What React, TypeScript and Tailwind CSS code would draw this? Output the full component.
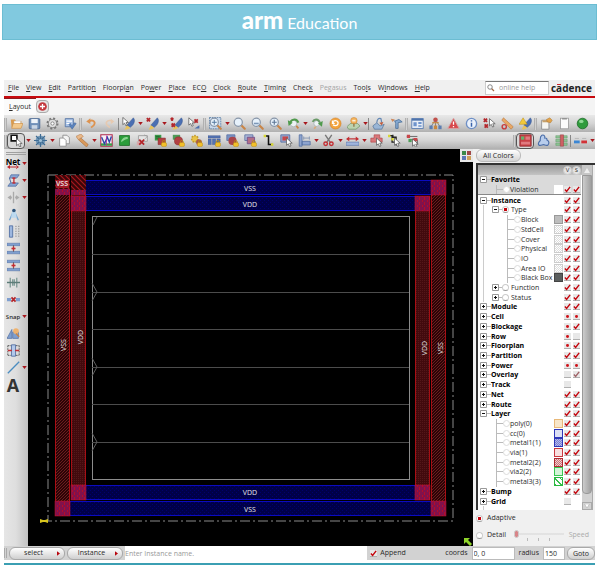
import { useState, type ReactNode } from "react";
import clsx from "clsx";

/* ---------- shared icon parts (16x16 grid) ---------- */

const Cursor = ({ x = 0, y = 0 }: { x?: number; y?: number }) => (
  <path
    d="M0 0v9l2.200-2 1.600 3.400 1.700-.8L4 6.300h3z"
    transform={`translate(${x} ${y})`}
    fill="#fff"
    stroke="#555"
    strokeWidth="0.9"
  />
);

const Cross = ({ x = 0, y = 0, s = 5 }: { x?: number; y?: number; s?: number }) => (
  <path
    d={`M${x} ${y}l${s} ${s}M${x + s} ${y}l${-s} ${s}`}
    stroke="#b3262b"
    strokeWidth="2.2"
  />
);

const Brush = () => (
  <>
    <path d="M14 1c2 2 1.600 6-.5 8.500l-3.500 3.500-4-3z" fill="#4a6fb3" stroke="#33538c" strokeWidth="0.6" />
    <path d="M6 10l4 3C8 15.500 5 15.500 3 15c1.800-1 1.500-3 3-5z" fill="#e8c35c" />
  </>
);

const Lock = ({ x = 9, y = 8 }: { x?: number; y?: number }) => (
  <g transform={`translate(${x} ${y})`}>
    <path d="M1.200 3V1.800a1.800 1.800 0 0 1 3.600 0V3" fill="none" stroke="#b98a12" strokeWidth="1.1" />
    <rect x="0" y="2.5" width="6.5" height="5" rx="2" fill="#f2c02b" stroke="#b98a12" strokeWidth="0.6" />
  </g>
);

const Lens = ({ children }: { children?: ReactNode }) => (
  <>
    <path d="M9.500 9.500l5 5" stroke="#c98546" strokeWidth="2.6" strokeLinecap="round" />
    <circle cx="6.5" cy="6.5" r="5" fill="#e6f1fb" stroke="#8795a8" strokeWidth="1.5" />
    {children}
  </>
);

const icons: Record<string, ReactNode> = {
  open: (
    <>
      <path d="M1 3h5l1.500 2H14v8H2z" fill="#d99b4e" />
      <path d="M5 5h8v4H5z" fill="#fff" stroke="#bbb" strokeWidth="0.5" />
      <path d="M4 8h12l-2.500 6H2z" fill="#f3c98d" stroke="#c98a3e" strokeWidth="0.7" />
    </>
  ),
  save: (
    <>
      <rect x="1.5" y="2" width="13" height="12.5" rx="1" fill="#6f8fb8" stroke="#41608c" />
      <path d="M4 2.500h8v5H4z" fill="#eef3f9" />
      <path d="M4.500 10h7v4.500h-7z" fill="#c9d5e4" />
    </>
  ),
  gear: (
    <>
      <circle cx="8" cy="8" r="6.3" stroke="#777" strokeWidth="2.2" strokeDasharray="2.5 2.45" />
      <circle cx="8" cy="8" r="5" fill="#e2e2e2" stroke="#777" />
      <circle cx="8" cy="8" r="2" fill="#fff" stroke="#777" />
    </>
  ),
  export: (
    <>
      <path d="M1.500 2h10v10h-10z" fill="#a9c2e6" stroke="#4f6f9f" />
      <path d="M3 5h7M3 8h4" stroke="#fff" strokeWidth="1.4" />
      <path d="M6 9l4 6 5-7-2-1-3.500 4-1.500-3z" fill="#5a83c0" stroke="#3c5f94" strokeWidth="0.6" />
    </>
  ),
  undo: (
    <>
      <path d="M4.500 5.500c5-3 8.500.5 7 3.500-.8 1.800-2.500 2.600-4 4" fill="none" stroke="#dd9350" strokeWidth="2.2" />
      <path d="M1.500 5.500L6.500 1.500v7z" fill="#dd9350" />
    </>
  ),
  redo: (
    <>
      <path d="M11.500 5.500c-5-3-8.500.5-7 3.500.8 1.800 2.500 2.600 4 4" fill="none" stroke="#e6c9b0" strokeWidth="2" />
      <path d="M14 5.500L9.500 2v7z" fill="#e6c9b0" />
    </>
  ),
  selectBrush: (
    <>
      <Brush />
      <Cursor x={1} y={0.5} />
    </>
  ),
  clearBrush: (
    <>
      <Brush />
      <Cross x={1} y={1.5} s={4} />
    </>
  ),
  redBrush: (
    <>
      <Brush />
      <Cross x={1} y={1} s={3} />
      <Cross x={2} y={8} s={4} />
    </>
  ),
  cursorClear: (
    <>
      <Cursor x={1} y={1} />
      <Cross x={8} y={3} s={4} />
      <path d="M8 14l6-4v4z" fill="#4d6fae" />
    </>
  ),
  zoomSelect: (
    <>
      <rect x="0.5" y="0.5" width="14" height="14" fill="#c8d9ec" stroke="#54779f" strokeDasharray="2 1" />
      <Lens>
        <path d="M3.500 6.500h6M6.500 3.500v6" stroke="#54779f" strokeWidth="1.2" />
      </Lens>
    </>
  ),
  zoomIn: <Lens />,
  zoomOut: (
    <Lens>
      <path d="M3.500 8h6" stroke="#7b97b8" strokeWidth="2" />
    </Lens>
  ),
  zoomFit: (
    <Lens>
      <path d="M3.500 6.500h6M6.500 3.500v6" stroke="#5d7796" strokeWidth="1.4" />
    </Lens>
  ),
  prevView: (
    <>
      <path d="M10 9l4 5" stroke="#c98546" strokeWidth="2.2" />
      <circle cx="8" cy="8" r="4" fill="#edf3f5" stroke="#a6b1b5" />
      <path d="M14 7C12 2 7 2 4 6" fill="none" stroke="#4f9a4c" strokeWidth="2.6" />
      <path d="M1 4l1 7 5-4z" fill="#4f9a4c" />
    </>
  ),
  nextView: (
    <>
      <path d="M7 10l-3 4.500" stroke="#d9a878" strokeWidth="2" />
      <circle cx="7" cy="8" r="3.5" fill="#edf3f5" stroke="#a6b1b5" />
      <path d="M2 6c2-4 7-4 9 1" fill="none" stroke="#6a9a68" strokeWidth="2.4" />
      <path d="M14.500 5l-1 7-5-4z" fill="#4f9a4c" />
    </>
  ),
  refresh: (
    <>
      <circle cx="8" cy="8" r="6.8" fill="#f3a440" stroke="#cf7b1b" strokeWidth="0.7" />
      <path d="M5 5.500c3.500-2.500 7 0 6 3-1 2.500-4.500 2.800-6 .8" fill="none" stroke="#fff" strokeWidth="1.7" />
      <path d="M3.500 3.500v5h4z" fill="#fff" />
    </>
  ),
  globe: (
    <>
      <path d="M0 12l4-4h9l3 3-5 4H2z" fill="#bcd3b0" stroke="#6f9467" strokeWidth="0.9" />
      <circle cx="8.5" cy="4.5" r="4" fill="#f2b25a" stroke="#c98034" strokeWidth="0.6" />
      <path d="M8.500 8v4" stroke="#8a6a3a" strokeWidth="1.4" />
      <path d="M6.500 3.500h4v2h-4z" fill="#fdeed8" />
    </>
  ),
  descend: (
    <>
      <path d="M1 11l5-4 4 4 5-2-3 6H3z" fill="#9ab6d6" stroke="#4a6c96" strokeWidth="0.8" />
      <path d="M6 7c0-4 2-6 5-5l1 5" fill="none" stroke="#6387b4" strokeWidth="1.5" />
      <path d="M9 7l3 3 2-4z" fill="#c25a3b" />
    </>
  ),
  ascend: (
    <>
      <path d="M2 3l4 2M6 5l5-2 4 3-5 1v7H7V8z" fill="#85a8d0" stroke="#426894" strokeWidth="0.9" />
      <path d="M1 2l5 1-3 3z" fill="#d18a5b" />
    </>
  ),
  window: (
    <>
      <rect x="1" y="2" width="14" height="12" fill="#e8eef7" stroke="#4e74ad" />
      <path d="M1 2h14v2.500H1z" fill="#4e74ad" />
      <path d="M3 6.500h4v5H3zM9 6h4v2.500H9zM9 10h4v2H9z" fill="#6d93cc" />
    </>
  ),
  hierarchy: (
    <>
      <path d="M8 3L2.500 12M8 3l5.500 9M8 3v9" fill="none" stroke="#777" />
      <circle cx="8" cy="3.5" r="2.8" fill="#c0504a" />
      <path d="M.5 10.500h4v4.500h-4z" fill="#5c7db0" />
      <path d="M6 10.500h4v4.500H6z" fill="#c8883f" />
      <path d="M11.500 10.500h4v4.500h-4z" fill="#5c7db0" />
      <path d="M4 7h8" stroke="#c8883f" strokeWidth="1.5" />
    </>
  ),
  warning: (
    <>
      <path d="M8 1.500L15 14H1z" fill="#d8474b" stroke="#d7a3a3" strokeWidth="1.2" strokeLinejoin="round" />
      <path d="M8 5.500v4M8 11v1.500" stroke="#fff" strokeWidth="1.6" />
    </>
  ),
  info: (
    <>
      <circle cx="8" cy="8" r="6.3" fill="#eaf1fb" stroke="#6f90c6" strokeWidth="1.7" />
      <path d="M8 7v5M8 4v1.600" stroke="#3a63ab" strokeWidth="1.8" />
    </>
  ),
  crossCursor: (
    <>
      <Cross x={1} y={2} s={4} />
      <Cross x={2} y={9} s={4} />
      <Cursor x={8} y={2} />
    </>
  ),
  ruler: (
    <>
      <path d="M3 1l12 11-2.500 3L1 4z" fill="#e8a765" stroke="#b9763a" strokeWidth="0.7" />
      <circle cx="4" cy="12" r="2.6" fill="none" stroke="#c73b3b" strokeWidth="1.7" />
    </>
  ),
  alertBrush: (
    <>
      <Brush />
      <path d="M5 1l5 8H0z" fill="#f3c93a" stroke="#b98a12" strokeWidth="0.6" />
    </>
  ),
  note: (
    <>
      <path d="M2 4h9v11H2z" fill="#f6f6f2" stroke="#888" />
      <path d="M3 4h7v2.500H3z" fill="#c7a06a" />
      <path d="M8 3l4-2 3 3-2 3-4-1z" fill="#e3a44c" stroke="#a8722a" strokeWidth="0.6" />
    </>
  ),
  page: (
    <>
      <rect x="3" y="1.5" width="10" height="13" fill="#fbfbfb" stroke="#999" />
      <path d="M5 1.500h6v1.500H5z" fill="#888" />
    </>
  ),
  ball: (
    <>
      <circle cx="8" cy="8" r="6.5" fill="#2f9b3c" stroke="#1d6d29" />
      <ellipse cx="6.5" cy="5.5" rx="2.8" ry="2" fill="#8fd895" />
    </>
  ),
  pick: (
    <>
      <path d="M1.500 1.500h7v7h-7z" fill="#fff" stroke="#111" strokeWidth="2" />
      <Cursor x={8} y={5.5} />
    </>
  ),
  snow: (
    <>
      <circle cx="8" cy="8" r="6" fill="#6f97b8" />
      <path d="M8 0v16M0 8h16M2.500 2.500l11 11M13.500 2.500l-11 11" stroke="#3f6c93" strokeWidth="1.5" />
      <circle cx="8" cy="8" r="2" fill="#9fc0d6" />
    </>
  ),
  copy: (
    <>
      <path d="M6 1.500h5l3 3V12H6z" fill="#f4f4f4" stroke="#888" />
      <path d="M2 5h5l3 3v7H2z" fill="#fff" stroke="#888" />
    </>
  ),
  pencil: (
    <>
      <path d="M5 4l10 9-2 3-10-9z" fill="#d99a5c" stroke="#a76b37" strokeWidth="0.7" />
      <path d="M0 3l6-3 3 3-6 4z" fill="#e9b98a" stroke="#b37848" strokeWidth="0.7" />
    </>
  ),
  wave: (
    <>
      <path d="M1 1h14v14H1z" fill="#f6eef6" stroke="#b0284c" strokeWidth="1.3" />
      <path d="M1 13h14" stroke="#3e9c48" strokeWidth="3" />
      <path d="M2 4l3.500 8L9 4l2.500 6L14 3" fill="none" stroke="#2d46a8" strokeWidth="1.7" />
      <path d="M8 2v12" stroke="#a72aa0" />
    </>
  ),
  greenBox: (
    <>
      <rect x="2" y="2" width="12" height="12" fill="#2c9d3b" stroke="#1b6e26" />
      <path d="M4 8c2-4 6-5 8-4v2C9 6 7 8 4 10z" fill="#8bd391" />
    </>
  ),
  clearHash: (
    <>
      <path d="M3 2h11v7H3z" fill="#e4e4e4" stroke="#999" />
      <path d="M10 1l4 2-4 4" stroke="#999" strokeWidth="0.8" />
      <path d="M1 9h4v5H1z" fill="#d7a8aa" />
      <Cross x={4} y={7} s={6} />
    </>
  ),
  netLock: (
    <>
      <path d="M1 1h8v7H1z" fill="#3b9a49" />
      <path d="M2 3h5M2 5h5" stroke="#1d6329" />
      <path d="M5 5h9v8H5z" fill="#b23f43" stroke="#7d2528" strokeWidth="0.6" />
      <Lock />
    </>
  ),
  netLockRed: (
    <>
      <path d="M1 1h9v6H1z" fill="#4f9a58" />
      <circle cx="8" cy="8.5" r="5" fill="#b23f43" stroke="#7d2528" strokeWidth="0.6" />
      <Lock />
    </>
  ),
  gearLock: (
    <>
      <circle cx="6" cy="6" r="4" fill="#e9c347" stroke="#c09a32" strokeWidth="2" strokeDasharray="2 1.5" />
      <circle cx="11" cy="10" r="3.5" fill="#a85a4c" />
      <Lock />
    </>
  ),
  pinLock: (
    <>
      <path d="M0 2h15v3H0zM0 6h4v7H0zM5.500 6h4v7h-4zM11 6h4v4h-4z" fill="#5473b3" stroke="#38528a" strokeWidth="0.5" />
      <Lock />
    </>
  ),
  ringLock: (
    <>
      <path d="M1 1h10v7H1z" fill="#7991c2" stroke="#5c74a8" />
      <circle cx="8" cy="8.5" r="5" fill="#a94449" />
      <Lock />
    </>
  ),
  boxLock: (
    <>
      <path d="M1 1h10v7H1z" fill="#aab7d6" stroke="#5c6fa3" />
      <path d="M4 4h9v8H4z" fill="#b46f86" stroke="#6b4c8c" />
      <Lock />
    </>
  ),
  wire: (
    <>
      <path d="M4 2.500h4v10.500h5" fill="none" stroke="#111" strokeWidth="1.9" />
      <path d="M2 1h3v3H2zM11 11.500h3v3h-3z" fill="#d7d636" />
    </>
  ),
  areaCursor: (
    <>
      <path d="M1 1h11v9H1z" fill="#96a8cf" stroke="#536aa0" />
      <path d="M3 3h7v5H3z" fill="#c7464a" />
      <Cursor x={8} y={5} />
    </>
  ),
  blueRuler: (
    <>
      <path d="M1.500 1h3.500v14H1.500zM5 9h10v4.500H5z" fill="#8ea4cf" stroke="#506b9f" strokeWidth="0.9" />
      <path d="M7 5h7M7 3v4M14 3v4" stroke="#7d8fae" />
    </>
  ),
  scissors: (
    <>
      <path d="M4 1l6 9M12 1L6 10" stroke="#777" strokeWidth="1.7" />
      <circle cx="4.5" cy="12" r="2.2" fill="none" stroke="#c32e33" strokeWidth="1.7" />
      <circle cx="11.5" cy="12" r="2.2" fill="none" stroke="#c32e33" strokeWidth="1.7" />
    </>
  ),
  stretch: (
    <>
      <path d="M0 10h16v4H0z" fill="#9fb4dc" stroke="#5370a7" strokeWidth="0.7" />
      <path d="M2 6h12" stroke="#c32e33" strokeWidth="1.4" />
      <path d="M0 6l4-3v6zM16 6l-4-3v6z" fill="#c32e33" />
    </>
  ),
  redCursor: (
    <>
      <path d="M5 1h7v4h3v5H1V5h4z" fill="#d9777a" stroke="#a93e42" strokeWidth="0.7" />
      <Cursor x={8} y={5} />
    </>
  ),
  wireCursor: (
    <>
      <path d="M1 2h4v8h4M6 1v3h4v10" fill="none" stroke="#222" strokeWidth="1.6" />
      <path d="M4 5h3v3H4zM0 1h3v3H0z" fill="#d7d636" />
      <Cursor x={8} y={5} />
    </>
  ),
  rewire: (
    <>
      <path d="M1 3h13M4 7h10v6" fill="none" stroke="#6b6b6b" strokeWidth="1.2" />
      <path d="M1 1h4v4H1zM9 5h5v4H9z" fill="#c7464a" />
      <path d="M3 6h4v4H3z" fill="#4e9d58" />
      <Cursor x={8} y={6} />
    </>
  ),
  floorView: (
    <>
      <path d="M1 1h14v14H1z" fill="#c84046" stroke="#8f2b30" />
      <path d="M2.500 3h4v4h-4z" fill="#63b06c" />
      <path d="M8 3h5.500v4H8zM2.500 9.500h11V13h-11z" fill="#e07a80" />
    </>
  ),
  amoeba: (
    <path
      d="M6 1.500c3-1 4 1.500 3.500 3.500 2-.5 3 1 2.800 2.500 2.500 1 3 4 1.200 6-2 1.500-4-.5-5.500-.5s-4 2-5.800.5c-1.500-2 .3-4 1.800-5.500C4 6 3.500 3 6 1.500z"
      fill="#b8cdec"
      stroke="#4a6da8"
      strokeWidth="1.4"
    />
  ),
  physView: (
    <>
      <path d="M1 2h14v3H1zM1 6.500h14v3H1zM1 11h14v3H1z" fill="#8cc394" stroke="#528f5a" strokeWidth="0.5" />
      <path d="M6.500 1h4v14h-4z" fill="#cf6064" stroke="#963a3e" strokeWidth="0.6" />
    </>
  ),
  dash: (
    <>
      <path d="M0 8h7v3.500H0z" fill="#3b86d4" />
      <path d="M9 8h7v3.500H9z" fill="#d23237" />
      <path d="M1 5.500h5M10 5.500h5" stroke="#aaa" strokeWidth="0.8" />
    </>
  ),
  // left palette
  editWire: (
    <>
      <path d="M5 1h10l-3 4H3zM4 11h10l-3 4H1z" fill="#88a5d4" stroke="#4a699f" strokeWidth="0.9" />
      <path d="M3 5l2 6" stroke="#4a699f" strokeWidth="1.2" />
      <path d="M8.500 4v8M6.500 5h4M6.500 11h4" stroke="#c32e33" strokeWidth="1.6" />
    </>
  ),
  move: <path d="M8 1v14M2 8h4M10 8h4M5 6l-3 2 3 2M11 6l3 2-3 2" fill="none" stroke="#aaa" strokeWidth="1.6" />,
  compass: (
    <>
      <path d="M8 4L3 15M9 4l5 11" stroke="#79a7cf" strokeWidth="1.7" />
      <path d="M6 5h5l1 7H5z" fill="#bcd9ef" />
      <circle cx="8.5" cy="3" r="2.2" fill="#2d557d" />
    </>
  ),
  bars: (
    <>
      <path d="M3 1h4v14H3z" fill="#9db7df" stroke="#4a699f" />
      <path d="M11 1v14M14.500 1v14" stroke="#777" strokeDasharray="1.5 1.5" />
    </>
  ),
  spread: (
    <>
      <path d="M0 1.500h16v3H0zM0 11.500h16v3H0z" fill="#7f9fcf" stroke="#4a699f" strokeWidth="0.6" />
      <path d="M8 4v8" stroke="#555" />
      <path d="M5.500 8h5M8 5.500v5" stroke="#c32e33" strokeWidth="1.8" />
    </>
  ),
  join: (
    <>
      <path d="M4 2v12M12 2v12M7 4v8M9 4v8" stroke="#7d9a95" strokeWidth="1.6" />
      <path d="M0 8h16" stroke="#5d7c78" strokeWidth="1.8" />
    </>
  ),
  cut: (
    <>
      <path d="M0 6h5v4H0zM11 6h5v4h-5z" fill="#7f9fcf" />
      <Cross x={5.5} y={5.5} />
    </>
  ),
  align: (
    <>
      <path d="M0 14L6 3v11zM7 14V6h7v8z" fill="#7f9fcf" stroke="#4a699f" strokeWidth="0.8" />
      <circle cx="11" cy="5" r="3.5" fill="#efb36f" />
      <path d="M11 8l4 4" stroke="#c98546" strokeWidth="1.7" />
    </>
  ),
  fence: (
    <>
      <path d="M5.500 1h5v14h-5z" fill="#b3c8ea" stroke="#4a699f" />
      <path d="M1 2h4M11 2h4M1 14h4M11 14h4M1 2v12M15 2v12" stroke="#444" strokeDasharray="2 1.2" />
      <path d="M1 8h5M10 8h5" stroke="#c32e33" strokeWidth="1.7" />
    </>
  ),
  line: <path d="M1 15L15 1" stroke="#4a8cc0" strokeWidth="1.6" />,
};

function Icon({ name }: { name: string }) {
  return (
    <svg viewBox="0 0 16 16" fill="none" className="size-[13px] shrink-0" aria-hidden="true">
      {icons[name]}
    </svg>
  );
}

const Caret = () => (
  <svg viewBox="0 0 6 4" className="h-[3px] w-[5px]" aria-hidden="true">
    <path d="M0 0h6L3 4z" fill="#a8161c" />
  </svg>
);

/* ---------- toolbars ---------- */

type Tool = { icon: string; menu?: boolean; active?: boolean } | "grip" | "sep" | "space";

const t = (icon: string): Tool => ({ icon });
const m = (icon: string): Tool => ({ icon, menu: true });

const fileTools: Tool[] = [
  "grip", t("open"), t("save"), t("gear"), t("export"),
  "grip", t("undo"), t("redo"),
  "sep", m("selectBrush"), m("clearBrush"), t("redBrush"), t("cursorClear"),
  "grip", m("zoomSelect"), t("zoomIn"), t("zoomOut"), t("zoomFit"), m("prevView"), t("nextView"), t("refresh"), m("globe"),
  "sep", t("descend"), t("ascend"),
  "grip", t("window"), t("hierarchy"), t("warning"), t("info"), t("crossCursor"), t("ruler"), t("alertBrush"),
  "grip", t("note"), t("page"), t("ball"),
];

const editTools: Tool[] = [
  "grip", { icon: "pick", menu: true, active: true }, m("snow"), t("copy"), m("pencil"),
  t("wave"), t("greenBox"), t("clearHash"), t("netLock"), t("netLockRed"), t("gearLock"), t("pinLock"),
  t("ringLock"), t("boxLock"), t("wire"), t("areaCursor"), m("blueRuler"), m("scissors"), m("stretch"),
  t("redCursor"), t("wireCursor"), t("rewire"),
  "space", "grip", { icon: "floorView", active: true }, t("amoeba"), t("physView"), "sep", m("dash"),
];

function Toolbar({ label, tools }: { label: string; tools: Tool[] }) {
  return (
    <div
      role="toolbar"
      aria-label={label}
      className="flex h-[17px] items-center overflow-hidden bg-linear-to-b from-[#e8e8e8] via-[#d4d4d4] to-[#b0b0b0]"
    >
      {tools.map((tool, i) => {
        if (tool === "space") return <div key={i} className="flex-1" />;
        if (tool === "grip")
          return <div key={i} className="h-3 w-[3px] shrink-0 border-x border-[#b0b0b0] bg-[#d0d0d0]" />;
        if (tool === "sep") return <div key={i} className="h-3 w-px shrink-0 bg-[#888]" />;
        return (
          <div key={i} className="flex shrink-0 items-center">
            <button
              aria-label={tool.icon}
              className={clsx(
                "flex h-4 w-[18px] items-center justify-center",
                tool.active && "rounded-sm border border-[#555] bg-[#d8d8d8]"
              )}
            >
              <Icon name={tool.icon} />
            </button>
            {tool.menu && (
              <button aria-label={`${tool.icon} options`} className="flex h-4 w-1.5 items-center justify-center">
                <Caret />
              </button>
            )}
          </div>
        );
      })}
    </div>
  );
}

/* ---------- menu bar ---------- */

const menus: [string, number][] = [
  ["File", 0], ["View", 0], ["Edit", 0], ["Partition", 8], ["Floorplan", 7], ["Power", 2],
  ["Place", 0], ["ECO", 2], ["Clock", 0], ["Route", 0], ["Timing", 0], ["Check", 4],
  ["Pegasus", -1], ["Tools", 3], ["Windows", 1], ["Help", 0],
];

function MenuBar() {
  return (
    <div className="flex h-[18px] items-center border-b-2 border-[#c80a0e] bg-[#f0f0f0]">
      <nav className="flex flex-1 gap-[7px] pl-1">
        {menus.map(([name, key]) => (
          <button key={name} disabled={key < 0} className="disabled:text-[#a5a5a5]">
            {key < 0 ? (
              name
            ) : (
              <>
                {name.slice(0, key)}
                <span className="underline underline-offset-1">{name[key]}</span>
                {name.slice(key + 1)}
              </>
            )}
          </button>
        ))}
      </nav>
      <label className="flex h-3.5 w-16 items-center gap-1 border border-[#ccc] border-t-[#777] bg-white px-px">
        <svg viewBox="0 0 16 16" className="size-2 shrink-0" aria-hidden="true">
          <path d="M9 9l5 5" stroke="#a36a45" strokeWidth="2.5" />
          <circle cx="6" cy="6" r="4.5" fill="#fff" stroke="#666" strokeWidth="1.5" />
        </svg>
        <input
          aria-label="online help"
          placeholder="online help"
          className="w-full min-w-0 outline-none placeholder:text-[#9a9a9a]"
        />
      </label>
      <div className="pr-[3px] pl-0.5 text-[10px] leading-none font-bold text-[#222]">
        c
        <span className="relative">
          a<span className="absolute inset-x-px top-[3px] h-px bg-[#d2232a]" />
        </span>
        dence
      </div>
    </div>
  );
}

/* ---------- left palette ---------- */

const palette: { icon?: string; text?: string; menu?: boolean }[] = [
  { text: "Net", menu: true },
  { icon: "editWire", menu: true },
  { icon: "move", menu: true },
  { icon: "compass" },
  { icon: "bars" },
  { icon: "spread" },
  { icon: "spread" },
  { icon: "join" },
  { icon: "cut" },
  { text: "Snap", menu: true },
  { icon: "align" },
  { icon: "fence" },
  { icon: "line", menu: true },
  { text: "A" },
];

function Palette() {
  return (
    <div className="w-6 shrink-0 bg-linear-to-r from-[#e6e6e6] via-[#dedede] to-[#c2c2c2] pt-[3px]">
      <div className="mx-0.5 h-[3px] border-y border-[#a0a0a0]" />
      {palette.map(({ icon, text, menu }, i) => (
        <button key={i} aria-label={text ?? icon} className="flex h-[17px] w-full items-center">
          <span className="flex w-[18px] shrink-0 justify-center">
            {icon && <Icon name={icon} />}
            {text === "Net" && (
              <span className="flex flex-col items-center text-[8px] leading-[7px] font-bold text-black">
                Net
                <svg viewBox="0 0 12 4" className="h-1 w-3" aria-hidden="true">
                  <path d="M0 2l3-2v4zM12 2L9 0v4zM2 1.500h8v1H2z" fill="#c0242a" />
                </svg>
              </span>
            )}
            {text === "Snap" && <span className="text-[6px] font-semibold">Snap</span>}
            {text === "A" && <span className="text-lg leading-4 font-bold text-[#333]">A</span>}
          </span>
          {menu && <Caret />}
        </button>
      ))}
    </div>
  );
}

/* ---------- floorplan canvas ---------- */

function Floorplan() {
  const rowLines = [254, 292, 329, 367, 404, 442];
  const vias = [
    [71, 196], [431, 180], [415, 196],
    [71, 485], [55, 501], [415, 485], [431, 501],
  ];
  return (
    <div className="min-w-0 flex-1 bg-black">
      <svg viewBox="28 149 445 397" className="block h-auto w-full" role="img" aria-label="Floorplan">
        <defs>
          <pattern id="redHatch" width="3" height="3" patternUnits="userSpaceOnUse">
            <rect width="3" height="3" fill="#2b0406" />
            <path d="M-1 2L2 -1M0 4L4 0" stroke="#7b2326" strokeWidth="0.8" />
          </pattern>
          <pattern id="redDense" width="2" height="2" patternUnits="userSpaceOnUse">
            <rect width="2" height="2" fill="#420a0d" />
            <rect width="1" height="1" fill="#54181a" />
          </pattern>
          <pattern id="blueDots" width="4" height="4" patternUnits="userSpaceOnUse">
            <rect width="4" height="4" fill="#000048" />
            <path d="M0 0h1v1H0zM2 2h1v1H2z" fill="#00006e" />
          </pattern>
          <pattern id="via" width="5" height="5" patternUnits="userSpaceOnUse">
            <rect width="5" height="5" fill="#b50d28" />
            <path d="M1 0v3M3 2v3M0 4h2M3 1h2" stroke="#4c1470" strokeWidth="1" />
          </pattern>
          <pattern id="coarse" width="5" height="5" patternUnits="userSpaceOnUse">
            <rect width="5" height="5" fill="#3a0508" />
            <path d="M-1 -1l7 7M-1 4l2 2M4 -1l2 2" stroke="#a8171d" strokeWidth="1.1" />
          </pattern>
        </defs>

        <rect x="48" y="175" width="405" height="346" fill="none" stroke="#8a8a8a" strokeDasharray="10 3 2 3" />

        <g stroke="#0b0bc0">
          <rect x="71.5" y="180.5" width="360" height="14" fill="url(#blueDots)" />
          <rect x="71.5" y="196.5" width="344" height="14" fill="url(#blueDots)" />
          <rect x="71.5" y="485.5" width="344" height="14" fill="url(#blueDots)" />
          <rect x="55.5" y="501.5" width="376" height="14" fill="url(#blueDots)" />
        </g>
        <g stroke="#a80e14">
          <rect x="55.5" y="175.5" width="14" height="340" fill="url(#redHatch)" />
          <rect x="71.5" y="175.5" width="14" height="324" fill="url(#redDense)" />
          <rect x="415.5" y="196.5" width="14" height="303" fill="url(#redDense)" />
          <rect x="431.5" y="180.5" width="14" height="335" fill="url(#redHatch)" />
        </g>
        <rect x="55" y="175" width="15" height="14" fill="url(#coarse)" />
        <rect x="55" y="189" width="15" height="6" fill="url(#via)" />
        <rect x="56" y="180" width="13" height="8" fill="#a01826" />
        <rect x="71" y="175" width="15" height="15" fill="url(#coarse)" />
        <rect x="71" y="190" width="15" height="5" fill="url(#via)" />
        {vias.map(([x, y]) => (
          <rect key={`${x}-${y}`} x={x} y={y} width="15" height="15" fill="url(#via)" stroke="#d01024" strokeWidth="0.5" />
        ))}

        <g fill="none" stroke="#5e5e5e">
          <rect x="92.5" y="216.5" width="317" height="263" stroke="#8c8c8c" />
          {rowLines.map((y) => (
            <path key={y} d={`M92 ${y + 0.5}h317`} stroke="#4c4c4c" />
          ))}
          <path d="M97 217l-4 8" />
          {[292, 367, 442].map((y) => (
            <path key={y} d={`M92 ${y - 9}l5 9-5 9`} />
          ))}
        </g>

        <g fill="#e8e8e8" fontSize="7" textAnchor="middle">
          <text x="62" y="186" fontWeight="600">VSS</text>
          <text x="250" y="191">VSS</text>
          <text x="250" y="207">VDD</text>
          <text x="250" y="495">VDD</text>
          <text x="250" y="512">VSS</text>
          <text transform="translate(66 345) rotate(-90)">VSS</text>
          <text transform="translate(83 337) rotate(-90)">VDD</text>
          <text transform="translate(427 348) rotate(-90)">VDD</text>
          <text transform="translate(443 348) rotate(-90)">VSS</text>
        </g>

        <path d="M40 519l3 1h2l3-1v4l-3-1h-2l-3 1z" fill="#d8c51e" />
        <path d="M464 538h6l-2 2 4 4-2 2-4-4-2 2z" fill="#8fd52a" />
        <g>
          <rect x="460" y="149" width="13" height="13" fill="#e8e8e8" />
          <path d="M462 151h4v4h-4z" fill="#3c8a48" />
          <path d="M467 151h4v4h-4z" fill="#a04848" />
          <path d="M462 156h4v4h-4z" fill="#5b78b4" />
          <path d="M467 156h4v4h-4z" fill="#d0a05a" />
        </g>
      </svg>
    </div>
  );
}

/* ---------- colour tree ---------- */

type Mark = "on" | "dot" | "off" | "dim" | "none";

interface Row {
  name: string;
  kind: "root" | "branch" | "leaf" | "sub";
  open?: boolean;
  v?: Mark;
  s?: Mark;
  swatch?: string;
}

const root = (name: string, v: Mark = "on", s: Mark = "on", open = false): Row => ({ name, kind: "root", v, s, open });
const leaf = (name: string, swatch: string): Row => ({ name, kind: "leaf", swatch });
const sub = (name: string, swatch: string): Row => ({ name, kind: "sub", swatch });

const checker = "border-[#ccc] bg-[repeating-conic-gradient(#ddd_0_25%,#fff_0_50%)] bg-size-[2px_2px]";

const rows: Row[] = [
  root("Favorite", "none", "none", true),
  sub("Violation", "border-white bg-white"),
  root("Instance", "on", "on", true),
  { name: "Type", kind: "branch", open: true },
  leaf("Block", "border-[#999] bg-[#bdbdbd]"),
  leaf("StdCell", checker),
  leaf("Cover", checker),
  leaf("Physical", checker),
  leaf("IO", checker),
  leaf("Area IO", checker),
  leaf("Black Box", "border-[#444] bg-[#5a5e5e]"),
  { name: "Function", kind: "branch" },
  { name: "Status", kind: "branch" },
  root("Module"),
  root("Cell", "dot", "dot"),
  root("Blockage", "dot", "on"),
  root("Row", "dot", "off"),
  root("Floorplan", "dot", "on"),
  root("Partition"),
  root("Power", "dot", "dot"),
  root("Overlay", "off", "dim"),
  root("Track", "off", "none"),
  root("Net"),
  root("Route"),
  root("Layer", "on", "on", true),
  sub("poly(0)", "border-[#e8b878] bg-[#f8e6c8]"),
  sub("cc(0)", "border-[#2e36b8] bg-[#dcdff5]"),
  sub("metal1(1)", "border-[#2e36b8] bg-[repeating-conic-gradient(#7a80d4_0_25%,#b4b9ea_0_50%)] bg-size-[2px_2px]"),
  sub("via(1)", "border-[#c83840] bg-[#f8e0e0]"),
  sub("metal2(2)", "border-[#b02830] bg-[repeating-conic-gradient(#cc7076_0_25%,#f0d0d0_0_50%)] bg-size-[2px_2px]"),
  sub("via2(2)", "border-[#38c850] bg-[#d4f4d8]"),
  sub("metal3(3)", "border-[#28b840] bg-[repeating-linear-gradient(45deg,#38c04c_0_1px,#fff_1px_4px)]"),
  root("Bump"),
  root("Grid", "off", "none"),
];

function Check({ mark = "on", label }: { mark?: Mark; label: string }) {
  const [checked, setChecked] = useState(mark !== "off");
  if (mark === "none") return <span className="w-[9px]" />;
  return (
    <span className="grid w-[9px] place-items-center">
      <input
        type="checkbox"
        aria-label={label}
        checked={checked}
        onChange={() => setChecked(!checked)}
        className="size-[7px] appearance-none border-b border-[#b0b0b0] bg-[#e8e8e8] [grid-area:1/1]"
      />
      {checked && (
        <svg viewBox="0 0 8 8" className="pointer-events-none size-[7px] [grid-area:1/1]" aria-hidden="true">
          {mark === "dot" ? (
            <circle cx="4" cy="4" r="1.7" fill="#cf1018" />
          ) : (
            <path d="M1 4l2 2.200L7 1" fill="none" stroke={mark === "dim" ? "#a06468" : "#c4060e"} strokeWidth="1.6" />
          )}
        </svg>
      )}
    </span>
  );
}

function Radio({ name, label, faint, on }: { name: string; label: string; faint?: boolean; on?: boolean }) {
  return (
    <input
      type="radio"
      name={name}
      aria-label={label}
      defaultChecked={on}
      className={clsx(
        "size-[7px] shrink-0 appearance-none rounded-full border bg-white checked:bg-[radial-gradient(circle,#c4060e_45%,#fff_55%)]",
        faint ? "border-[#dcdcdc]" : "border-[#ccc] border-b-[#999]"
      )}
    />
  );
}

function Expander({ open, name }: { open?: boolean; name: string }) {
  return (
    <button aria-label={`${open ? "Collapse" : "Expand"} ${name}`} className="shrink-0">
      <svg viewBox="0 0 7 7" className="block size-[7px]" aria-hidden="true">
        <path d="M.5.5h6v6h-6z" fill="#fff" stroke="#999" />
        <path d={open ? "M2 3.500h3" : "M2 3.500h3M3.500 2v3"} stroke="#111" />
      </svg>
    </button>
  );
}

function TreeRow({ row }: { row: Row }) {
  const { name, kind, open, v, s, swatch } = row;
  const favorite = name === "Favorite" || name === "Violation";
  return (
    <li
      className={clsx(
        "flex min-h-0 flex-1 basis-0 items-center pl-0.5 leading-[9px]",
        favorite && "bg-[#dadada]",
        name === "Violation" && "border-b border-[#888]"
      )}
    >
      {kind === "root" && (
        <>
          <Expander open={open} name={name} />
          <span className="w-1 border-t border-[#bbb]" />
          <span className="font-bold text-black">{name}</span>
        </>
      )}
      {kind === "branch" && (
        <>
          <span className="ml-[3px] w-[9px] self-stretch border-l border-[#ccc]" />
          <Expander open={open} name={name} />
          <span className="w-[3px] border-t border-[#bbb]" />
          <Radio name="selectable" label={name} on={open} />
          <span className="pl-0.5">{name}</span>
        </>
      )}
      {kind === "leaf" && (
        <>
          <span className="ml-[3px] w-6 self-stretch border-l border-[#ccc]" />
          <span className="flex w-[7px] items-center self-stretch border-l border-[#bbb]">
            <span className="w-full border-t border-[#bbb]" />
          </span>
          <Radio name="selectable" label={name} faint />
          <span>{name}</span>
        </>
      )}
      {kind === "sub" && (
        <>
          <span className="ml-4 flex w-[7px] items-center self-stretch border-l border-[#bbb]">
            <span className="w-full border-t border-[#bbb]" />
          </span>
          <Radio name="selectable" label={name} faint />
          <span>{name}</span>
        </>
      )}
      <span className="ml-auto flex items-center">
        {swatch && <span className={clsx("h-[9px] w-[9px] border", swatch)} />}
        <Check mark={v} label={`${name} visible`} />
        <Check mark={s} label={`${name} selectable`} />
      </span>
    </li>
  );
}

function ColorPanel() {
  return (
    <aside className="flex w-[122px] shrink-0 flex-col bg-[#f0f0f0] pl-[3px]">
      <div className="h-3.5">
        <button className="h-[13px] rounded-md border border-[#bbb] bg-linear-to-b from-white to-[#d4d4d4] px-1.5 leading-[11px]">
          All Colors
        </button>
      </div>
      <div className="flex flex-1 border-t-2 border-l-2 border-[#333] bg-white">
        <div className="flex flex-1 flex-col">
          <div className="flex h-2.5 items-center justify-end bg-linear-to-b from-[#989898] to-[#c4c4c4] pr-px">
            {["V", "S"].map((c) => (
              <button
                key={c}
                className="h-[9px] w-[9px] rounded-full border border-[#ccc] bg-[#e4e4e4] text-center text-[6px] leading-[7px]"
              >
                {c}
              </button>
            ))}
          </div>
          <ul className="flex flex-1 flex-col pr-px">
            {rows.map((row) => (
              <TreeRow key={row.name} row={row} />
            ))}
          </ul>
          <div className="ml-[5px] h-1 border-l border-[#ccc]" />
        </div>
        <div className="flex w-[10px] flex-col bg-[#d2d2d2]">
          <button aria-label="Scroll up" className="flex h-2.5 items-center justify-center bg-[#c6c6c6]">
            <svg viewBox="0 0 6 5" className="h-[5px] w-1.5" aria-hidden="true">
              <path d="M3 0l3 5H0z" fill="#eee" />
            </svg>
          </button>
          <div className="flex-1 rounded-b-sm border border-[#999] bg-linear-to-r from-[#ccc] to-[#a0a0a0]" />
          <div className="h-2" />
          <button aria-label="Scroll down" className="flex h-2 items-center justify-center border border-[#aaa]">
            <svg viewBox="0 0 6 5" className="h-1 w-1.5" aria-hidden="true">
              <path d="M0 0h6L3 5z" fill="#fff" stroke="#999" strokeWidth="0.5" />
            </svg>
          </button>
        </div>
        <div className="w-[3px] border-l border-[#aaa] bg-[#f0f0f0]" />
      </div>
      <div className="h-9">
        <label className="flex h-4 items-center gap-1">
          <Radio name="detail" label="Adaptive" on />
          Adaptive
        </label>
        <div className="flex h-[18px] items-center">
          <label className="flex items-center gap-1">
            <Radio name="detail" label="Detail" />
            Detail
          </label>
          <label className="flex flex-1 items-center justify-between pr-1.5 pl-2 text-[#aaa]">
            <span className="grid">
              <input
                type="range"
                aria-label="Speed"
                min="0"
                max="4"
                defaultValue="0"
                className="h-2 w-[50px] appearance-none bg-linear-to-b from-transparent from-40% via-[#ccc] via-50% to-transparent to-60% [&::-webkit-slider-thumb]:h-2 [&::-webkit-slider-thumb]:w-[5px] [&::-webkit-slider-thumb]:appearance-none [&::-webkit-slider-thumb]:rounded-sm [&::-webkit-slider-thumb]:border [&::-webkit-slider-thumb]:border-[#ccc] [&::-webkit-slider-thumb]:bg-[#d88488]"
              />
              <span className="flex justify-center gap-2.5">
                <span className="h-[3px] w-px bg-[#bbb]" />
                <span className="h-[3px] w-px bg-[#bbb]" />
                <span className="h-[3px] w-px bg-[#bbb]" />
              </span>
            </span>
            Speed
          </label>
        </div>
      </div>
    </aside>
  );
}

/* ---------- status bar ---------- */

function PillMenu({ children }: { children: ReactNode }) {
  return (
    <button className="flex h-[13px] w-14 items-center rounded-md border border-[#a8a8a8] bg-linear-to-b from-white to-[#cfcfcf] pr-1">
      <span className="flex-1">{children}</span>
      <svg viewBox="0 0 4 6" className="h-[5px] w-[3px]" aria-hidden="true">
        <path d="M0 0l4 3-4 3z" fill="#b8060e" />
      </svg>
    </button>
  );
}

function StatusBar() {
  return (
    <div className="flex h-3.5 items-center gap-0.5 bg-[#d2d2d2]">
      <div className="h-2.5 w-[3px] border-x border-[#aaa]" />
      <PillMenu>select</PillMenu>
      <PillMenu>Instance</PillMenu>
      <input
        aria-label="Instance name"
        placeholder="Enter Instance name."
        className="h-3.5 min-w-0 flex-1 bg-white outline-none placeholder:text-[#999]"
      />
      <label className="flex w-[74px] items-center gap-0.5">
        <Check label="Append" />
        Append
      </label>
      <label className="flex items-center gap-1">
        coords
        <input defaultValue="0, 0" className="h-[13px] w-[43px] border border-[#bbb] bg-white px-px outline-none" />
      </label>
      <label className="flex items-center gap-1 pl-0.5">
        radius
        <input defaultValue="150" className="h-[13px] w-[22px] border border-[#bbb] bg-white px-px outline-none" />
      </label>
      <button className="h-[13px] w-7 rounded-md border border-[#a8a8a8] bg-linear-to-b from-white to-[#cfcfcf] leading-[11px]">
        Goto
      </button>
    </div>
  );
}

export default function App() {
  return (
    <div className="bg-white pt-1 font-['Open_Sans','Noto_Sans',sans-serif] text-[7px] leading-[10px] text-[#2a2a2a]">
      <header className="mr-[3px] ml-0.5 flex h-9 items-baseline justify-center gap-1 border border-[#6cbdd2] bg-[#81c9df] pt-px font-['Lato',sans-serif] text-white">
        <span className="text-2xl leading-7 font-black">arm</span>
        <span className="text-base leading-7">Education</span>
      </header>

      <main className="mt-10 mr-[5px] ml-1">
        <MenuBar />
        <div className="flex h-[17px] items-center bg-[#f4f4f4]">
          <button className="h-full w-8 border-t border-[#8f1a1e] bg-[#fbfbfb] text-center">
            <span className="underline underline-offset-1">L</span>ayout
          </button>
          <button
            aria-label="Add tab"
            className="flex size-[13px] items-center justify-center rounded border border-[#aaa] bg-[#e4e4e4]"
          >
            <svg viewBox="0 0 10 10" className="size-[9px]" aria-hidden="true">
              <circle cx="5" cy="5" r="4.8" fill="#c4393f" />
              <path d="M5 2.200v5.600M2.200 5h5.600" stroke="#fff" strokeWidth="1.4" />
            </svg>
          </button>
        </div>
        <Toolbar label="File and view" tools={fileTools} />
        <Toolbar label="Edit" tools={editTools} />
        <div className="flex">
          <Palette />
          <Floorplan />
          <ColorPanel />
        </div>
        <StatusBar />
      </main>
      <div className="mt-[3px] mr-[5px] ml-1 h-0.5 bg-[#3b9fb3]" />
    </div>
  );
}
